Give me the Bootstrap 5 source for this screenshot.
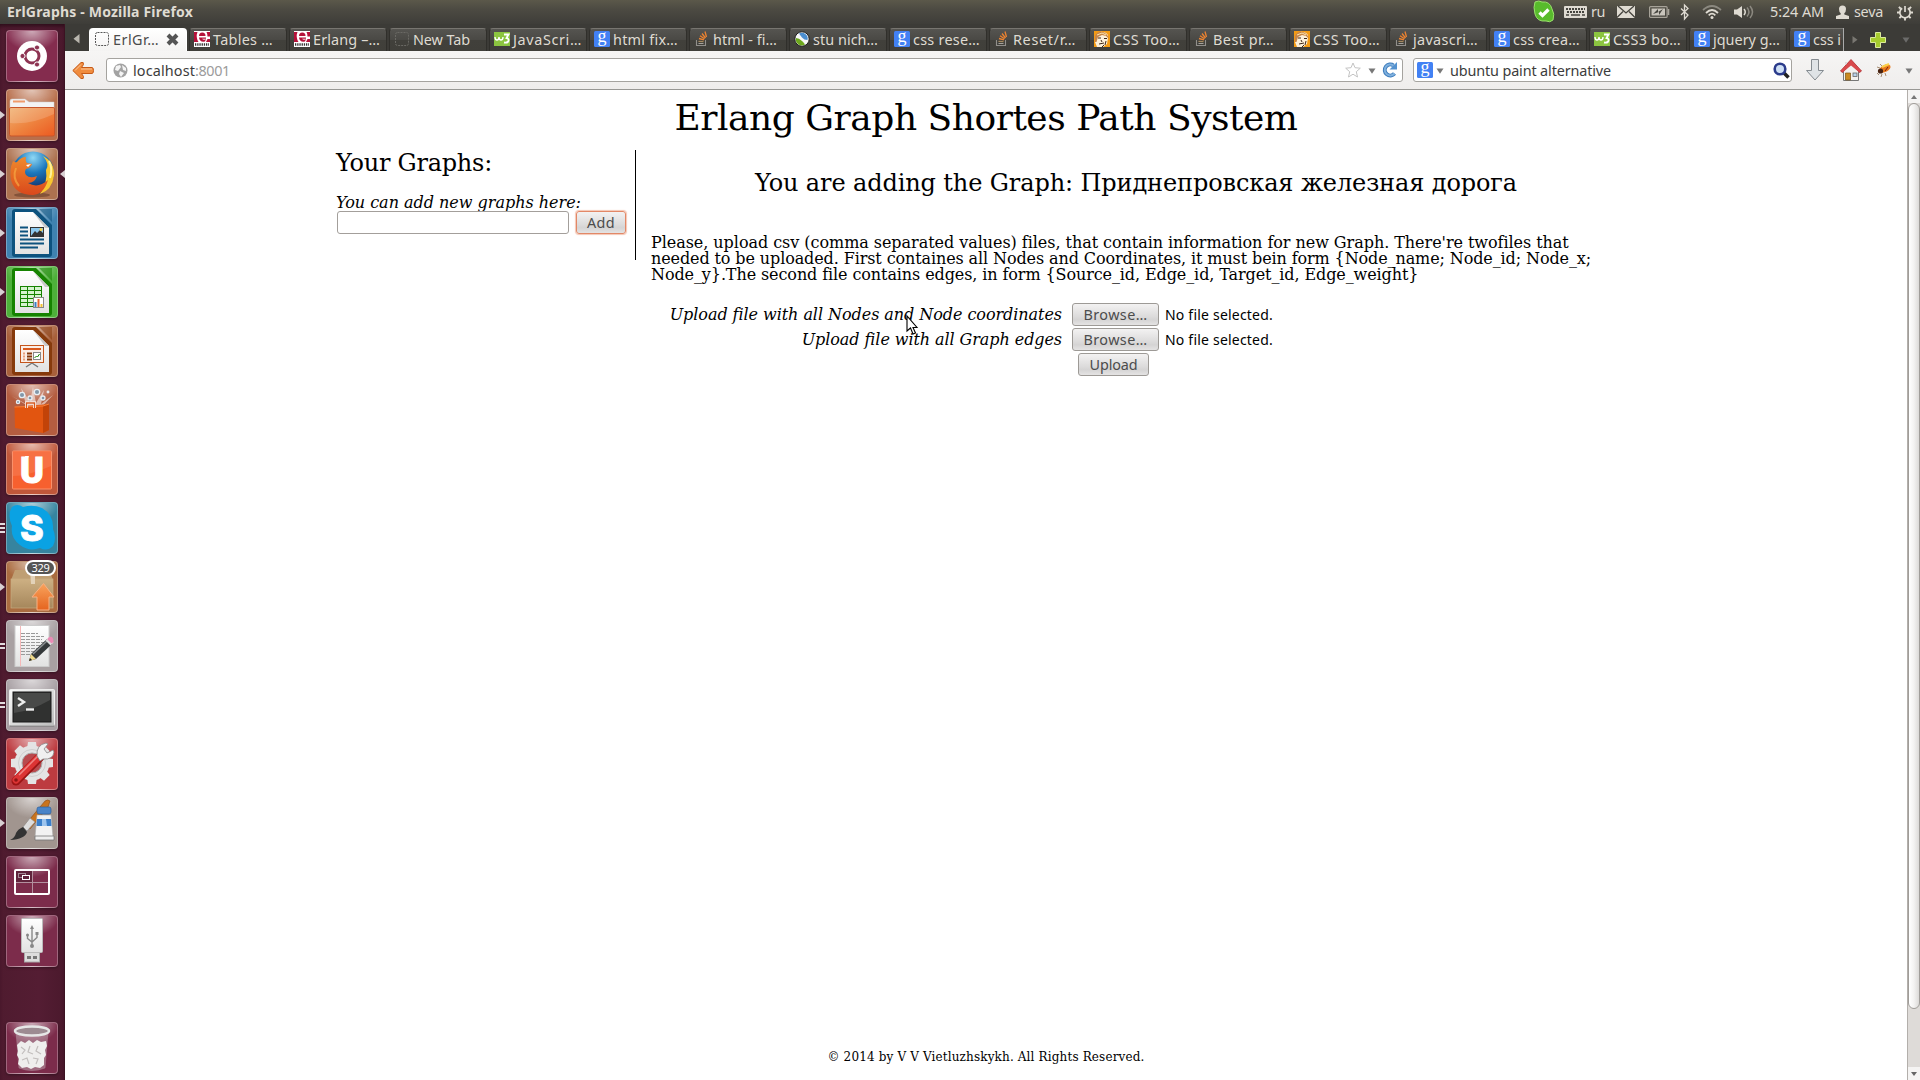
<!DOCTYPE html>
<html lang="en">
<head>
<meta charset="utf-8">
<title>ErlGraphs</title>
<link rel="stylesheet" href="https://cdn.jsdelivr.net/npm/bootstrap@5.3.0/dist/css/bootstrap.min.css">
<script src="https://cdn.jsdelivr.net/npm/bootstrap@5.3.0/dist/js/bootstrap.bundle.min.js"></script>
<style>
body{width:1920px;height:1080px;overflow:hidden;background:#fff;color:#000;font-family:"Noto Sans","Open Sans",sans-serif;font-size:14.4px;line-height:20px}
svg{display:block;flex:none;overflow:visible}
.fit{white-space:nowrap;display:inline-block}
.panel{height:24px;background:linear-gradient(#5b584a,#4c4a42 40%,#3e3d39);color:#dfdbd2;padding:0 7px}
.panel .fit{line-height:24px}
.wtitle{font-weight:700;font-size:14px}
.launcher{width:65px;background:linear-gradient(90deg,#4f1b2f,#541d33 60%,#4b192d);border-right:1px solid #3c1222;padding:6px 0 6px 6px;box-shadow:inset 0 4px 4px -2px #2a0c18}
.tile{width:52px;height:52px;border-radius:4px;margin-bottom:7px;position:relative;border:1px solid rgba(255,255,255,.28);background-image:radial-gradient(ellipse 27px 20px at 50% 0,rgba(255,255,255,.6),rgba(255,255,255,0));box-shadow:0 1px 3px rgba(0,0,0,.35)}
.tile svg{margin:-1px}
.pips{position:absolute;left:-7px;top:20px;width:6px;height:10px}
.pipr{position:absolute;left:52px;top:20px;width:6px;height:10px}
.updates{position:absolute;right:1px;top:-2px;width:31px;height:16px;border:2px solid #fff;border-radius:8px;background:#555;color:#fff;font-size:11px;line-height:12px;text-align:center}
.tabrow{height:27px;background:#3c3b37;color:#dfdbd2;padding-left:8px}
.tabstrip{width:1754px;height:23px;overflow:hidden;gap:2px}
.ftab{width:98px;height:23px;flex:none;padding:2px 0 0 4px;gap:3px;border-radius:4px 4px 0 0;background:linear-gradient(#555450,#4a4945 48%,#41403b 52%,#403f3a);border:1px solid #302f2b;border-top-color:#777570;border-bottom:0;overflow:hidden}
.ftab .fit{line-height:17px}
.ftab.on{background:linear-gradient(#fff,#f4f3f2);border-color:#fff;color:#4c4c4c}
.toolbar2{height:39px;background:linear-gradient(#f6f5f4,#efedec);border-bottom:1px solid #989794;color:#3c3c3c}
.field{height:24px;background:#fff;border:1px solid #a5a39f;border-radius:3px}
.field .fit{padding-top:1px}
.scroller{width:13px;background:#dedbd8;border-left:1px solid #b3afab}
.thumb{height:906px;border:1px solid #a09d99;border-radius:7px;background:linear-gradient(90deg,#fff,#f3f2f1 50%,#dcdad8)}
.arrowbtn{height:13px;background:#f5f4f3}
.page{width:1842px;font-family:"DejaVu Serif",serif;font-size:16px;line-height:16px}
.wrapper{width:1300px}
.pagetitle{font-size:36px;line-height:36px;font-weight:400;margin:10px 0 14px}
.side{width:300px;height:110px;border-right:1px solid #000}
.sub{font-size:24px;line-height:24px;font-weight:400;margin:0}
.field-add{width:232px;height:23px;border:1px solid #a39f9b;border-radius:3px;background:#fff}
.gbtn{height:23px;border:1px solid #9d9a96;border-radius:3px;background:linear-gradient(#f3f2f2,#dcdbdb 60%,#d5d4d4 75%,#e4e3e3);color:#4c4c4c;font-family:"Noto Sans",sans-serif;font-size:14.4px;line-height:20px;padding:0;text-align:center}
.gbtn.hot{border:1.5px solid #e28867;box-shadow:0 0 1px 1px #f4c7b5;line-height:19px}
.frow{height:25px}
.ui{font-family:"Noto Sans",sans-serif;font-size:14px}
.legal{font-size:12px;line-height:14px}
.pointer{position:absolute;left:906px;top:315px}
</style>
</head>
<body class="d-flex flex-column">
<svg width="0" height="0" class="position-absolute">
<defs>
<linearGradient id="gFold" x1="0" y1="0" x2="1" y2="1"><stop stop-color="#f0b070"/><stop offset=".5" stop-color="#ee8440"/><stop offset="1" stop-color="#ec5a20"/></linearGradient>
<linearGradient id="gPage" x1="0" y1="0" x2="0" y2="1"><stop stop-color="#fff"/><stop offset="1" stop-color="#e2e2e2"/></linearGradient>
<radialGradient id="gGlobe" cx=".5" cy=".15" r=".8"><stop stop-color="#8fd8f5"/><stop offset=".45" stop-color="#1c78bd"/><stop offset="1" stop-color="#10265c"/></radialGradient>
<linearGradient id="gFox" x1="0" y1="0" x2="0" y2="1"><stop stop-color="#f08a2c"/><stop offset="1" stop-color="#d9481c"/></linearGradient>
<linearGradient id="gArr" x1="0" y1="0" x2="0" y2="1"><stop stop-color="#f9a35c"/><stop offset="1" stop-color="#e5641f"/></linearGradient>
<linearGradient id="gBox" x1="0" y1="0" x2="0" y2="1"><stop stop-color="#cdb083"/><stop offset="1" stop-color="#a6875c"/></linearGradient>
<linearGradient id="gGrey" x1="0" y1="0" x2="1" y2="1"><stop stop-color="#fafafa"/><stop offset="1" stop-color="#bdbdbd"/></linearGradient>
<symbol id="i-blank" viewBox="0 0 16 16"><rect x="1.500" y="1.500" width="13" height="13" rx="2" fill="none" stroke="#555" stroke-dasharray="2 1"/></symbol>
<symbol id="i-blankd" viewBox="0 0 16 16"><rect x="1.500" y="1.500" width="13" height="13" rx="2" fill="none" stroke="#6a6964" stroke-dasharray="2 1"/></symbol>
<symbol id="i-erl" viewBox="0 0 16 16"><rect width="16" height="16" fill="#fff"/><path d="M0 1h3.500Q1.500 6 4.500 11H0zM12.500 1H16v4.500h-2.500Q13.500 3 12.500 1zM13.500 8H16v3h-4z" fill="#b5123a"/><path d="M5 5Q5 1.500 8.300 1.500T11.500 5zM5 6.500h7v1.200H8Q9.500 9.500 12 8.300L11 10.500Q5.500 11.500 5 6.500z" fill="#b5123a"/><path d="M1 13.500h14" stroke="#333" stroke-width="2.400" stroke-dasharray="1.300 .9"/></symbol>
<symbol id="i-w3" viewBox="0 0 16 16"><rect width="16" height="14" y="1" fill="#8cc540"/><path d="M1 6q0 3 2 3t2-3q0 3 2 3t2-3" fill="none" stroke="#fff" stroke-width="1.400"/><path d="M10 3.500h4.500L12.500 7Q15 7.500 14.500 9.800T10 11.500" fill="none" stroke="#fff" stroke-width="1.800"/></symbol>
<symbol id="i-goo" viewBox="0 0 16 16"><rect width="16" height="16" rx="1.500" fill="#4281f4"/><text x="8" y="11" text-anchor="middle" font-family="Liberation Serif,serif" font-size="18" fill="#fff">g</text></symbol>
<symbol id="i-so" viewBox="0 0 16 16"><path d="M2.500 9v5.500h9V9" fill="none" stroke="#918f8b" stroke-width="1.100"/><path d="M4.500 12.500h5" stroke="#a5a29d" stroke-width="1.200"/><path d="M4.500 10.300l5 .4" stroke="#a58a62" stroke-width="1.200"/><path d="M5 7.500l5 1.400M6 4.800l4.500 3M8 2.500l3.500 4.500M11 .5l1.500 5.500" stroke="#ec8330" stroke-width="1.300"/></symbol>
<symbol id="i-stu" viewBox="0 0 16 16"><circle cx="8" cy="8" r="7.200" fill="#f7f7f7" stroke="#222" stroke-width="1"/><path d="M5 2.500A5.800 5.800 0 0 1 13.500 9Q10 9 8 6.500T5 2.500z" fill="#4b8ed0"/><path d="M2 7Q5 7 8 10T11 13.500A6 6 0 0 1 2 7z" fill="#6da71d"/></symbol>
<symbol id="i-css" viewBox="0 0 16 16"><rect width="16" height="16" fill="#f49b14"/><path d="M3 5Q3 0 9 1T14 7L13 13 9 16H3L1 11z" fill="#fdf0d8"/><path d="M1 5Q4-1 9 1T15 8L12 5 8 4 4 6 2.500 11 1 11z" fill="#c98545"/><path d="M4 7h3M10 7.500h3M7 9l1 2M5 13l5-1M12 10l-1 4M10 14l-2 2" stroke="#3d2516" stroke-width="1"/><path d="M3 4l5-2 4 2" fill="none" stroke="#ffe6ae"/></symbol>
<symbol id="i-down" viewBox="0 0 8 6"><path d="M.5.5h7L4 5.700z" fill="#777"/></symbol>
</defs>
</svg>

<!-- system panel -->
<header class="panel d-flex align-items-center flex-none">
<span class="fit wtitle me-auto" data-w="186">ErlGraphs - Mozilla Firefox</span>
<svg width="22" height="22" viewBox="0 0 22 22" style="margin-right:9px"><path d="M2 1Q6-1 9 1Q17 0 19 8Q22 13 20 19Q17 22 13 20Q4 21 2 13Q0 6 2 1z" fill="#58bb2c" stroke="#9be06d" stroke-width="1"/><path d="M6.500 11.500l3 3 6-6" fill="none" stroke="#fff" stroke-width="3.300"/></svg>
<svg width="23" height="12" viewBox="0 0 23 12"><rect width="23" height="12" rx="1" fill="#dfdbd2"/><path d="M2 3h19M3 6h17" stroke="#45443e" stroke-width="1.800" stroke-dasharray="2 1"/><path d="M2 9h3m2 0h9m2 0h3" stroke="#45443e" stroke-width="1.600"/></svg>
<span class="fit" data-w="14" style="margin:0 12px 0 4px">ru</span>
<svg width="18" height="12" viewBox="0 0 18 12"><rect width="18" height="12" fill="#dfdbd2"/><path d="M1 0l8 7 8-7M0 11.500l6-6M18 11.500l-6-6" fill="none" stroke="#45443e" stroke-width="1.300"/></svg>
<svg width="21" height="12" viewBox="0 0 21 12" style="margin:0 10px 0 14px"><rect x=".6" y=".6" width="17.500" height="10.800" rx="1" fill="none" stroke="#a7a399" stroke-width="1.200"/><rect x="2.500" y="2.500" width="13.500" height="7" fill="#c9c5bc"/><path d="M4 8l5-5v3l5-3-4 6V6z" fill="#45443e"/><path d="M19.500 3v6" stroke="#a7a399" stroke-width="1.600"/></svg>
<svg width="9" height="16" viewBox="0 0 9 16"><path d="M1 4.500l7 6.500-3.500 4V1L8 4.500 1 11" fill="none" stroke="#dfdbd2" stroke-width="1.300"/></svg>
<svg width="20" height="14" viewBox="0 0 20 14" style="margin:0 12px 0 13px"><path d="M1 5Q10-3 19 5" fill="none" stroke="#8c8980" stroke-width="1.700"/><path d="M4 8Q10 2 16 8M6.700 10.300Q10 7 13.300 10.300" fill="none" stroke="#dfdbd2" stroke-width="1.800"/><circle cx="10" cy="12.500" r="1.500" fill="#dfdbd2"/></svg>
<svg width="20" height="14" viewBox="0 0 20 14"><path d="M0 4.500h3L8 1v12L3 9.500H0z" fill="#dfdbd2"/><path d="M10 4q2.500 3 0 6" fill="none" stroke="#dfdbd2" stroke-width="1.500"/><path d="M13 2.500q4 4.500 0 9M16 1q5 6 0 12" fill="none" stroke="#8c8980" stroke-width="1.500"/></svg>
<span class="fit" data-w="54" style="margin:0 12px 0 16px">5:24 AM</span>
<svg width="13" height="14" viewBox="0 0 13 14"><path d="M6.500.5Q10 .5 10 4 10 7 8.300 8.300V9.500L13 11v3H0v-3l4.700-1.500V8.300Q3 7 3 4 3 .5 6.500.5z" fill="#dfdbd2"/></svg>
<span class="fit" data-w="29" style="margin:0 14px 0 5px">seva</span>
<svg width="16" height="17" viewBox="0 0 17 17"><path d="M5.500 4A5.500 5.500 0 1 0 11.500 4M8.500 1.500V8" fill="none" stroke="#dfdbd2" stroke-width="1.800"/><path d="M0 8.500h3m11 0h3M2 2.500l2 2m8.500 8l2 2m.5-12l-2 2m-8.500 8l-2 2m6 2.500v-3" stroke="#dfdbd2" stroke-width="2"/></svg>
</header>

<div class="d-flex flex-grow-1" style="height:1056px">
<!-- launcher -->
<nav class="launcher d-flex flex-column" id="launcher">
<div class="tile" style="background-color:#842c4e"><svg width="52" height="52"><circle cx="26" cy="26" r="15" fill="#fff"/><circle cx="26" cy="26" r="7" fill="none" stroke="#8d3352" stroke-width="3"/><g fill="#8d3352" stroke="#fff" stroke-width="1"><circle cx="16.500" cy="26" r="2.600"/><circle cx="31" cy="17.500" r="2.600"/><circle cx="31" cy="34.500" r="2.600"/></g></svg></div>
<div class="tile" data-pip="1" style="background-color:#b86f4c"><svg width="52" height="52"><path d="M4 12q0-2 2-2h13l4 3h25v8H4z" fill="#f3f3f3" stroke="#ccc" stroke-width=".5"/><path d="M7 12.500h12" stroke="#ef9b6b" stroke-width="2"/><rect x="3.500" y="18.500" width="45" height="28.500" rx="1.500" fill="url(#gFold)" stroke="#c8562a"/><path d="M4 19h44v6Q25 36 4 34z" fill="#fff" opacity=".16"/></svg></div>
<div class="tile" data-pip="1" data-right="1" style="background-color:#ad7250"><svg width="52" height="52"><ellipse cx="26" cy="47" rx="18" ry="2.500" fill="#5c3422" opacity=".5"/><circle cx="27" cy="24.500" r="21" fill="url(#gGlobe)"/><path d="M37 8Q49 14 48 28 46 42 34 46 42 34 40 22 44 16 37 8z" fill="#f8c630"/><path d="M43 13q4 8 1 17" stroke="#fff19a" stroke-width="2" fill="none"/><path d="M7 13Q9 15 11 14 15 9 20 9 19 13 21 15L26 16Q25 20 20 21 18 24 20 27 24 31 31 28 29 35 22 35 32 41 42 32 38 46 27 47 9 47 5 32 3 22 7 13z" fill="url(#gFox)"/><path d="M10 20Q6 30 13 38" stroke="#f6a843" stroke-width="2" fill="none" opacity=".7"/><path d="M20 17l5-1-3 3z" fill="#fff"/></svg></div>
<div class="tile" data-pip="1" data-doc="#0d527e" style="background-color:#3f82b0"></div>
<div class="tile" data-pip="1" data-doc="#168300" style="background-color:#4eb03a"></div>
<div class="tile" data-doc="#863a0c" style="background-color:#a8603b"></div>
<div class="tile" style="background-color:#b45d40"><svg width="52" height="52"><path d="M25 24L6 12l14 8L15 4l9 14L27 3l3 16 8-13-3 14 12-9-14 15z" fill="#fff" opacity=".55"/><g stroke="#e8eef3" stroke-width="1.300" fill="#8298aa"><circle cx="16" cy="11" r="2.700"/><circle cx="31" cy="8" r="2.700"/><circle cx="37" cy="14" r="2"/><circle cx="24" cy="14" r="2"/><circle cx="12" cy="18" r="1.600"/><circle cx="42" cy="8" r=".8"/></g><path d="M8.500 23L43 20 43 46 37 49 9 44z" fill="#e25510"/><path d="M43 20v26l-6 3V22z" fill="#c24308"/><path d="M8.500 23L37 22l6-2" stroke="#f6803a" fill="none"/><path d="M20.500 24v-5h8v5" fill="none" stroke="#fff" stroke-width="3"/><path d="M20.500 24v-5h8v5" fill="none" stroke="#d4581f" stroke-width="1.500"/></svg></div>
<div class="tile" style="background-color:#c0573a"><svg width="52" height="52"><rect x="6.500" y="8" width="39" height="38" rx="1" fill="#f7602f" stroke="#fa906a" /><path d="M7 9h38v14Q22 33 7 33z" fill="#fff" opacity=".1"/><text x="26" y="40" text-anchor="middle" font-family="Roboto,sans-serif" font-weight="900" font-size="36" fill="#fff" stroke="#fff" stroke-width="1">U</text><path d="M19 13l4 0-3 6z" fill="#fff"/></svg></div>
<div class="tile" data-pip="3" style="background-color:#36849f"><svg width="52" height="52"><path d="M6 5Q11 1 17 5 27 2 36 6 48 13 47 27 51 36 47 44 41 50 34 46 23 50 14 43 4 36 6 24 1 13 6 5z" fill="#0aa2e3"/><text x="26" y="38.500" text-anchor="middle" font-family="Inter,sans-serif" font-weight="800" font-size="36" fill="#fff" stroke="#fff" stroke-width=".8">S</text></svg></div>
<div class="tile" data-pip="1" style="background-color:#aa6c40"><svg width="52" height="52"><path d="M9 9h34l4 10H5z" fill="#bf9f73"/><rect x="5" y="18" width="42" height="29" fill="url(#gBox)" stroke="#c9ad82" stroke-width=".7"/><path d="M24 9h5v14h-4z" fill="#e3d2b8"/><path d="M37.500 22.500L48 36h-5v13H31V36h-5z" fill="url(#gArr)" stroke="#f7b184"/></svg><span class="updates"><span class="fit" data-w="18">329</span></span></div>
<div class="tile" data-pip="2" style="background-color:#a8a0a2"><svg width="52" height="52"><rect x="9" y="5.500" width="34" height="41" fill="url(#gPage)" stroke="#ccc"/><path d="M14.500 6v40" stroke="#f5b8b8"/><path d="M15 13.500h17m-17 3h23m-23 3h21m-21 3h23m-23 3h20m-20 3h18m-18 3h14m-14 3h9" stroke="#999" stroke-width="1" stroke-dasharray="4 1"/><path d="M23 41l2-7 16-15 5 5-16 15z" fill="#34383a"/><path d="M27 34l14-13" stroke="#8b8f91" stroke-width="1.500"/><path d="M39.500 20.500l3-3 5 5-3 3z" fill="#ddd"/><path d="M42 18q2-2 4-1 2 2 1.500 5l-2 1.500-4-4z" fill="#ea8bb5"/><path d="M23 41l2-7 5 5z" fill="#efd98a"/><path d="M23 41l1-3 2 2z" fill="#222"/></svg></div>
<div class="tile" data-pip="2" style="background-color:#a79fa3"><svg width="52" height="52"><rect x="3.500" y="10.500" width="45" height="36" rx="1" fill="url(#gGrey)" stroke="#ededed"/><path d="M4 47h44" stroke="#777"/><rect x="7" y="13" width="38" height="30" fill="#303130" stroke="#181818"/><path d="M8 14h36v7Q25 32 8 34z" fill="#fff" opacity=".12"/><path d="M12 19l6 4-6 4" fill="none" stroke="#eee" stroke-width="2.400"/><path d="M20 30.500h8" stroke="#eee" stroke-width="2.400"/></svg></div>
<div class="tile" style="background-color:#bd3b40"><svg width="52" height="52"><g fill="#e4e4e4"><circle cx="26" cy="25" r="17.500"/><path d="M22 4h8l1 7H21zM22 46h8l1-7H21z"/><path d="M22 4h8l1 7H21zM22 46h8l1-7H21z" transform="rotate(45 26 25)"/><path d="M22 4h8l1 7H21zM22 46h8l1-7H21z" transform="rotate(90 26 25)"/><path d="M22 4h8l1 7H21zM22 46h8l1-7H21z" transform="rotate(135 26 25)"/></g><circle cx="26" cy="25" r="10" fill="#b94a4e" stroke="#aaa"/><circle cx="26" cy="25" r="13.500" fill="none" stroke="#cfcfcf" stroke-width="1"/><path d="M10 43L34 19" stroke="#9c1414" stroke-width="9" stroke-linecap="round"/><path d="M10 42L34 18" stroke="#dc3434" stroke-width="7" stroke-linecap="round"/><path d="M13 37L33 17" stroke="#f08484" stroke-width="1.500"/><path d="M31 18Q30 7 40 5l2 1-4 5 3 4 6-3 1 2Q47 22 37 21l-3 2z" fill="#f0f0f0" stroke="#888" stroke-width=".8"/><circle cx="10" cy="42" r="1.800" fill="#8c1515"/></svg></div>
<div class="tile" data-pip="1" style="background-color:#a1958f"><svg width="52" height="52"><path d="M39 4q3-2 5 0l-2 6-18 22-5-4z" fill="#c9741e" stroke="#8d4a10" stroke-width=".6"/><path d="M24 21l-7 9 4 4 8-9z" fill="#ddd" stroke="#888" stroke-width=".6"/><path d="M17 30l4 5Q19 42 4 43 9 41 10 36 12 32 17 30z" fill="#333"/><path d="M31 18h14l2 22H29z" fill="#f2f2f2" stroke="#aaa" stroke-width=".6"/><path d="M31 22h14l.5 7h-15z" fill="#3b7fca"/><path d="M36 22h4l1 7h-5z" fill="#9cc4ee"/><rect x="31" y="10" width="14" height="7" rx="2" fill="#4a84c8" stroke="#2c609c" stroke-width=".7"/><path d="M29 39h19v4H29z" fill="#eee" stroke="#777" stroke-width=".8"/></svg></div>
<div class="tile" style="background-color:#7c2c4b"><svg width="52" height="52"><rect x="9" y="14" width="17" height="12" fill="#60243c"/><path d="M26.500 14v24M9 26.500h34" stroke="#b3909f" stroke-width="1"/><rect x="9" y="14" width="34" height="24" rx="1" fill="none" stroke="#fff" stroke-width="2"/><rect x="12.500" y="17.500" width="7" height="4" fill="none" stroke="#a48995"/><rect x="16.500" y="19.500" width="7" height="4" fill="#60243c" stroke="#fff"/></svg></div>
<div class="tile" style="background-color:#7c2c4b"><svg width="52" height="52"><rect x="18.500" y="37" width="15" height="10" fill="#ddd" stroke="#aaa"/><rect x="21" y="41" width="4" height="3" fill="#777"/><rect x="27" y="41" width="4" height="3" fill="#777"/><rect x="15.500" y="3.500" width="21" height="34" rx="1" fill="url(#gPage)" stroke="#bbb"/><path d="M26 13v17M21.500 20v3.500L26 27l5-4.500V19" fill="none" stroke="#888" stroke-width="1.400"/><circle cx="26" cy="31" r="2" fill="#888"/><path d="M24 14l2-4 2 4z" fill="#888"/><circle cx="21.500" cy="20" r="1.500" fill="#888"/><rect x="29.500" y="17" width="3" height="3" fill="#888"/></svg></div>
<div class="tile mt-auto mb-0" style="background-color:#7c2c4b"><svg width="52" height="52"><path d="M10 9l3 37q13 5 26 0l3-37z" fill="#c8b5bd" opacity=".45" stroke="#ddd" stroke-width=".6"/><path d="M11 23l4-4 4 2 4-3 4 3 4-3 4 2 5-1 1 5-2 4 1 5-2 3v7l-4 3-5-1-4 2-4-2-5 1-4-4 1-5-2-4 1-4z" fill="#efeeed"/><path d="M15 25l4 3-3 4m8-8l-2 6 5 2m5-8l-2 5 5 3M16 38l5-2 2 6m4-6l5 1-2 5" stroke="#c2bebd" stroke-width="1.200" fill="none"/><ellipse cx="26" cy="9" rx="17" ry="4.500" fill="#9d8b92" stroke="#e6e6e6" stroke-width="2.500"/></svg></div>
</nav>

<!-- browser window -->
<div class="d-flex flex-column flex-grow-1">
<div class="tabrow d-flex align-items-end">
<svg width="7" height="10" viewBox="0 0 7 10" style="margin:0 9px 7px 0"><path d="M6.500 0v9.500L.5 4.700z" fill="#b9b6ae"/></svg>
<div class="tabstrip d-flex" id="tabs"></div>
<div class="d-flex align-items-center" style="height:23px"><i style="width:1px;height:23px;background:#aaa"></i>
<svg width="6" height="8" viewBox="0 0 6 8" style="margin:0 12px 0 8px"><path d="M.5 0v7.500L5.500 3.700z" fill="#797771"/></svg>
<svg width="16" height="16" viewBox="0 0 16 16"><path d="M5.500.5h5v5h5v5h-5v5h-5v-5h-5v-5h5z" fill="#a7cc2e" stroke="#dcec9b"/></svg>
<svg width="8" height="6" class="ms-3" style="opacity:.8"><use href="#i-down"/></svg></div>
</div>
<div class="toolbar2 d-flex align-items-center">
<svg width="22" height="19" viewBox="0 0 22 19" style="margin:0 12px 0 7px"><path d="M.8 9.500L9 1.500q3-1 2.500 2L9.500 6.500H20q1.500 0 1.500 3t-1.500 3H9.500l2 3q.5 3-2.500 2z" fill="#f08c3e" stroke="#c65a17"/><path d="M3 9.500l6-6M9 8h11" stroke="#fbc69a"/></svg>
<div class="field d-flex align-items-center" style="width:1297px;padding-left:6px">
<svg width="15" height="15" viewBox="0 0 15 15"><circle cx="7.500" cy="7.500" r="7" fill="#a3a3a3"/><path d="M3 3l4-1 1 2-3 4-3-1zM9 2l4 3v3l-3-1zM7 8l4 2-3 4-2-3z" fill="#f4f4f4"/></svg>
<span class="fit" data-w="62" style="margin-left:5px">localhost</span><span class="fit" data-w="35" style="color:#9b9b9b">:8001</span>
<svg width="16" height="16" viewBox="0 0 16 16" class="ms-auto"><path d="M8 1l2 4.700 5.300.5-4 3.500 1.200 5.300L8 12.200 3.500 15l1.200-5.300-4-3.500L6 5.700z" fill="#fff" stroke="#c4c4c4"/></svg>
<svg width="8" height="6" style="margin:2px 6px 0 7px"><use href="#i-down"/></svg>
<svg width="16" height="16" viewBox="0 0 16 16" style="margin-right:4px"><path d="M12.500 11.500A5.500 5.500 0 1 1 11.500 3.500" fill="none" stroke="#3e7cbc" stroke-width="4"/><path d="M12.500 11.500A5.500 5.500 0 1 1 11.500 3.500" fill="none" stroke="#7eb0de" stroke-width="2"/><path d="M15 0v7.500H7.500z" fill="#5592cf"/></svg>
</div>
<div class="field d-flex align-items-center" style="width:379px;margin-left:10px;padding-left:3px">
<svg width="16" height="16"><use href="#i-goo"/></svg><svg width="8" height="6" style="margin:2px 6px 0 3px"><use href="#i-down"/></svg>
<span class="fit" data-w="161">ubuntu paint alternative</span>
<svg width="17" height="17" viewBox="0 0 17 17" class="ms-auto" style="margin-right:1px"><path d="M11 11l4.500 4.500" stroke="#222" stroke-width="3.500"/><circle cx="7" cy="7" r="5.300" fill="#cfe0f5" stroke="#2b3c8c" stroke-width="2.600"/></svg>
</div>
<svg width="18" height="22" viewBox="0 0 18 22" style="margin-left:14px"><path d="M5.500.5h7v11h5L9 21 .5 11.500h5z" fill="#dfe3e6" stroke="#858b90"/></svg>
<svg width="22" height="22" viewBox="0 0 22 22" style="margin:0 14px 0 16px"><path d="M3.500 10h15v11.500h-15z" fill="#f2f1ee" stroke="#777"/><path d="M11 .5L21.500 12l-2 1.500L11 5.500l-8.500 8L.5 12z" fill="#d8494b" stroke="#a62a2c" stroke-width=".8"/><path d="M5 6V3h2v2z" fill="#ddd"/><path d="M11 5.500l7 7V14H4v-1.500z" fill="#f2f1ee"/><path d="M11 1L21 11.800l-2 1.200L11 6.500 3 13l-2-1.200z" fill="#d8494b"/><path d="M5.500 14h5v7h-5z" fill="#c98a22" stroke="#7b5311" stroke-width=".7"/><rect x="13" y="14" width="4" height="3.500" fill="#b9d4ea" stroke="#666" stroke-width=".8"/></svg>
<svg width="15" height="14" viewBox="0 0 15 14"><path d="M3 12L1 10m5 1l-1 3m4-4l1 3M4 5L1 4m5-1L4 1" stroke="#a58c72"/><ellipse cx="9" cy="5.500" rx="6" ry="3.500" transform="rotate(-28 9 5.500)" fill="#e8791d"/><path d="M6 4l7-3" stroke="#fbd14a" stroke-width="2"/><circle cx="4.500" cy="8" r="2.600" fill="#472210"/><path d="M9 8l3-4" stroke="#7a1f0a"/></svg>
<svg width="8" height="6" style="margin:2px 0 0 14px"><use href="#i-down"/></svg>
</div>

<div class="d-flex flex-grow-1">
<main class="page d-flex flex-column align-items-center">
<h1 class="pagetitle"><span class="fit" data-w="623">Erlang Graph Shortes Path System</span></h1>
<div class="wrapper d-flex">
<aside class="side">
<h2 class="sub fit" data-w="156" style="margin-top:1px">Your Graphs:</h2>
<div style="margin-top:20px;height:16px"><em class="fit" data-w="245">You can add new graphs here:</em></div>
<div class="d-flex"><input class="field-add" style="margin:0 7px 0 1px" type="text"><button class="gbtn hot" style="width:50px"><span class="fit" data-w="28">Add</span></button></div>
</aside>
<section class="flex-grow-1">
<h2 class="sub text-center" style="margin-top:21px"><span class="fit" data-w="762">You are adding the Graph: Приднепровская железная дорога</span></h2>
<p style="margin:40px 0 20px 15px"><span class="fit d-block" data-w="917">Please, upload csv (comma separated values) files, that contain information for new Graph. There're twofiles that</span><span class="fit d-block" data-w="940">needed to be uploaded. First containes all Nodes and Coordinates, it must bein form {Node_name; Node_id; Node_x;</span><span class="fit d-block" data-w="767">Node_y}.The second file contains edges, in form {Source_id, Edge_id, Target_id, Edge_weight}</span></p>
<div class="frow d-flex"><div class="text-end" style="width:426px;padding-top:4px"><em class="fit" data-w="392">Upload file with all Nodes and Node coordinates</em></div><button class="gbtn" style="width:87px;margin:0 6px 0 10px"><span class="fit" data-w="64">Browse…</span></button><span class="ui fit" data-w="108" style="line-height:23px">No file selected.</span></div>
<div class="frow d-flex"><div class="text-end" style="width:426px;padding-top:4px"><em class="fit" data-w="260">Upload file with all Graph edges</em></div><button class="gbtn" style="width:87px;margin:0 6px 0 10px"><span class="fit" data-w="64">Browse…</span></button><span class="ui fit" data-w="108" style="line-height:23px">No file selected.</span></div>
<button class="gbtn d-block" style="width:71px;margin-left:442px"><span class="fit" data-w="48">Upload</span></button>
</section>
</div>
<footer class="legal mt-auto" style="margin-bottom:16px"><span class="fit" data-w="317">© 2014 by V V Vietluzhskykh. All Rights Reserved.</span></footer>
</main>
<div class="scroller d-flex flex-column">
<div class="arrowbtn d-flex justify-content-center align-items-center"><svg width="6" height="4"><path d="M0 4h6L3 0z" fill="#777"/></svg></div>
<div class="thumb"></div>
<div class="arrowbtn mt-auto d-flex justify-content-center align-items-center"><svg width="6" height="4"><path d="M0 0h6L3 4z" fill="#666"/></svg></div>
</div>
</div>
</div>
</div>
<svg class="pointer" width="12" height="20" viewBox="0 0 12 20"><path d="M1 1v15l3.500-3 2.500 6 2.500-1-2.500-5.500H11z" fill="#fff" stroke="#000" stroke-width="1.100"/></svg>
<script>
// office document tiles share one page shape
const inner=["<path d='M14 20.500h8m-8 4h8m-8 4h8m-8 4h24m-24 4h24m-24 4h18' stroke='#0d527e' stroke-width='2'/><rect x='24.500' y='20.500' width='13' height='9' fill='#8cc8ee' stroke='#333'/><path d='M25 29l4-5 2 2 3-3 3 3v3z' fill='#333'/><circle cx='35' cy='22.500' r='1.500' fill='#f6d34a'/>",
"<rect x='14.500' y='20.500' width='21' height='20' fill='#d6f3cf' stroke='#168300'/><path d='M21.500 20v20M28.500 20v20M14 24.500h21m-21 4h21m-21 4h21m-21 4h21' stroke='#168300'/><rect x='27.500' y='31.500' width='10' height='10' fill='#fff' stroke='#888'/><path d='M29.500 41v-5' stroke='#3b7fc0' stroke-width='2'/><path d='M32.500 41v-8' stroke='#e8662c' stroke-width='2'/><path d='M35.500 41v-3' stroke='#f2c230' stroke-width='2'/>",
"<path d='M26 38l-6 4m6-4l6 4' stroke='#777' stroke-width='1.500'/><rect x='14.500' y='20.500' width='23' height='17' fill='#fbeee6' stroke='#c4551c'/><path d='M17 24h18' stroke='#d9591d' stroke-width='2'/><path d='M17 28.500h2m-2 3h2m-2 3h2' stroke='#e8a07c' stroke-width='2'/><path d='M21 28.500h5m-5 3h5m-5 3h5' stroke='#863a0c' stroke-width='2'/><rect x='27.500' y='27.500' width='7' height='7' fill='#fff' stroke='#888'/><path d='M28.500 33l2-2 1 1 2-3' fill='none' stroke='#168300'/>"];
document.querySelectorAll("[data-doc]").forEach((t,i)=>{const c=t.dataset.doc;t.innerHTML=`<svg width="52" height="52"><path d="M9 2h21l16 16v29q0 3-3 3H9q-3 0-3-3V5q0-3 3-3z" fill="${c}"/><path d="M33 2h13v13z" fill="${c}" opacity=".55"/><path d="M9 5h18l16 16v26H9z" fill="url(#gPage)"/><path d="M27 5l16 16h-4z" fill="#c9c9c9"/>${inner[i]}</svg>`});
// browser tabs: icon, label, label width
const tabs=[["blank","ErlGr…",46],["erl","Tables …",60],["erl","Erlang –…",67],["blankd","New Tab",57],["w3","JavaScri…",69],["goo","html fix…",65],["so","html - fi…",64],["stu","stu nich…",65],["goo","css rese…",67],["so","Reset/r…",63],["css","CSS Too…",67],["so","Best pr…",61],["css","CSS Too…",67],["so","javascri…",65],["goo","css crea…",67],["w3","CSS3 bo…",68],["goo","jquery g…",67],["goo","css i",28]];
document.getElementById("tabs").innerHTML=tabs.map((t,i)=>`<div class="ftab d-flex ${i?"":"on"}"><svg width="16" height="16"><use href="#i-${t[0]}"/></svg><span class="fit" data-w="${t[2]}">${t[1]}</span>${i?"":'<svg width="13" height="13" viewBox="0 0 13 13" style="margin:2px 0 0 4px"><path d="M2 2l9 9M11 2l-9 9" stroke="#555" stroke-width="4"/></svg>'}</div>`).join("");
// running-window markers
document.querySelectorAll("[data-pip]").forEach(t=>{const n=+t.dataset.pip;const d=n==1?'<path d="M0 1l5 4-5 4z" fill="#d8d0d3"/>':(n==2?[3,7]:[1,5,9]).map(y=>`<path d="M0 ${y}h5" stroke="#e3dcdf" stroke-width="2"/>`).join("");
t.insertAdjacentHTML("beforeend",`<svg class="pips" style="margin:0">${d}</svg>`+(t.dataset.right?'<svg class="pipr" style="margin:0"><path d="M6 1L1 5l5 4z" fill="#d8d0d3"/></svg>':""))});
// letter-spacing brings each label to its nominal width
document.querySelectorAll(".fit[data-w]").forEach(e=>{const b=e.classList.contains("d-block");if(b)e.style.width="max-content";const w=e.getBoundingClientRect().width;e.style.letterSpacing=((+e.dataset.w-w)/e.textContent.length).toFixed(3)+"px"});
</script>
</body>
</html>
